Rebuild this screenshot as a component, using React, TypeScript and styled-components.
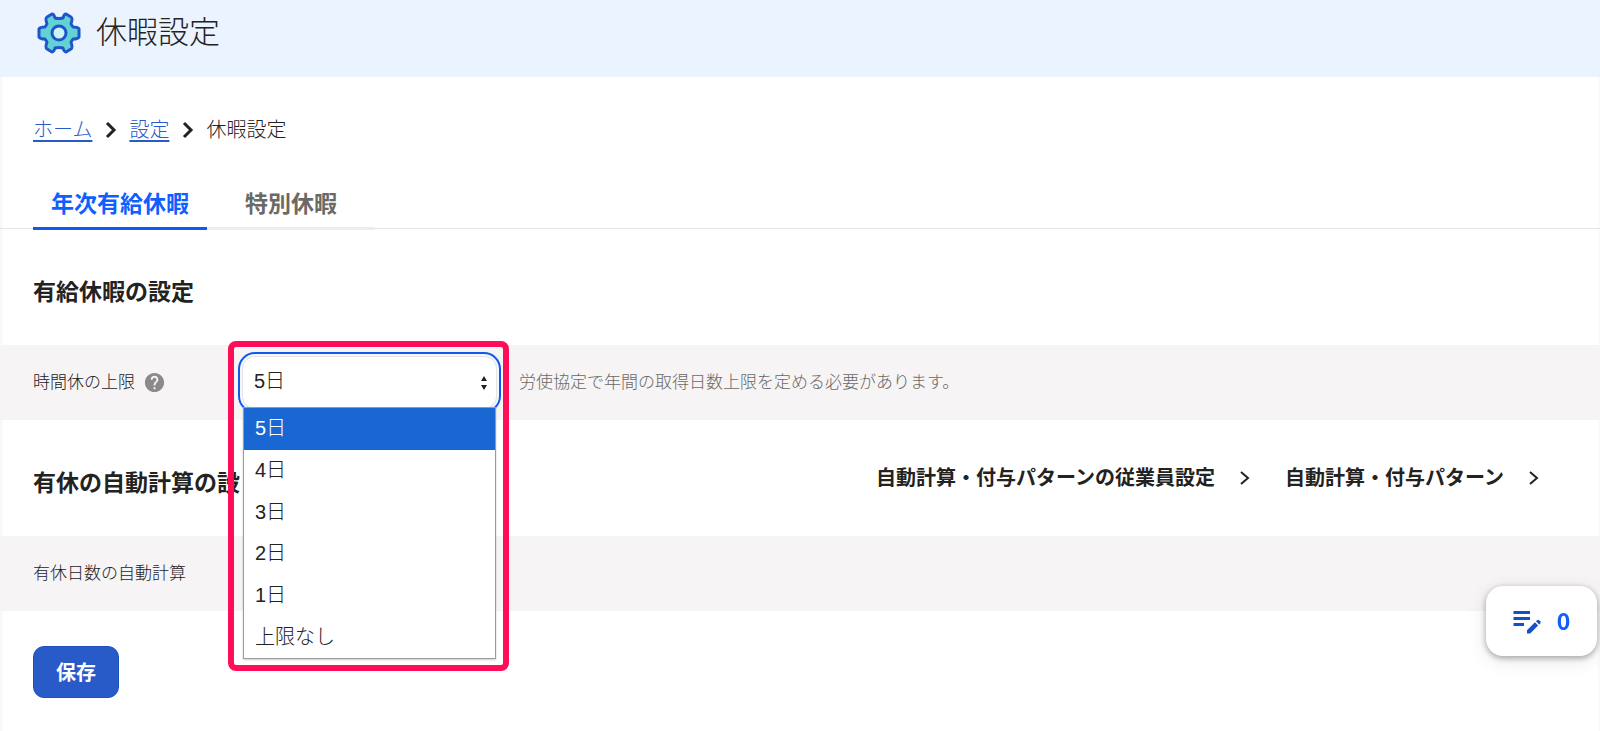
import React, { useId } from "react";
import styled, { createGlobalStyle, css } from "styled-components";
import { MdEditNote, MdHelp } from "react-icons/md";

const GlobalStyle = createGlobalStyle`
  *, *::before, *::after { box-sizing: border-box; }
  body {
    margin: 0;
    background: #fff;
    color: #23221e;
    font-family: "Liberation Sans", "Noto Sans CJK JP", sans-serif;
    font-size: 20px;
    font-weight: 300;
  }
  h1, h2, p, ul, ol { margin: 0; padding: 0; }
  ul, ol { list-style: none; }
  button, select { font: inherit; color: inherit; }
`;

const Page = styled.div`
  min-height: 100vh;
  box-shadow: inset 5px 0 5px -5px #00000014, inset -2px 0 0 #fafafa;
`;

const Header = styled.header`
  display: flex;
  align-items: center;
  gap: 15px;
  height: 77px;
  padding: 0 37px 11px;
  background: #ebf3ff;
`;

const Title = styled.h1`
  font-size: 31px;
  font-weight: 300;
  line-height: 40px;
`;

const Breadcrumb = styled.ol`
  display: flex;
  align-items: center;
  gap: 12px;
  padding: 38px 33px 0;
  line-height: 30px;
`;

const Crumb = styled.li`
  display: flex;
  align-items: center;
  gap: 13px;
`;

const CrumbLink = styled.a`
  color: #285ac8;
  text-decoration: underline;
  text-decoration-thickness: 2px;
  text-underline-offset: 3px;
`;

const TabBar = styled.div`
  display: flex;
  margin-top: 34px;
  padding: 0 33px;
  border-bottom: 1px solid #e4e4e4;
`;

const Tab = styled.button<{ $active?: boolean }>`
  min-width: 168px;
  margin-bottom: -2px;
  padding: 8px 18px 6px;
  border: 0;
  border-bottom: 3px solid ${(p) => (p.$active ? "#0f5aeb" : "#ececec")};
  background: none;
  color: ${(p) => (p.$active ? "#0f5fff" : "#6b6965")};
  font-size: 23px;
  font-weight: 700;
  line-height: 34px;
`;

const SectionHead = styled.div`
  display: flex;
  align-items: center;
  justify-content: space-between;
  height: 116px;
  padding: 0 60px 0 33px;
`;

const SectionTitle = styled.h2`
  padding-top: 10px;
  font-size: 23px;
  font-weight: 700;
  line-height: 34px;
`;

const SectionLinks = styled.nav`
  display: flex;
  gap: 34px;
`;

const SectionLink = styled.a`
  display: flex;
  align-items: center;
  gap: 24px;
  color: inherit;
  font-weight: 700;
  line-height: 30px;
  text-decoration: none;
`;

const Row = styled.div`
  display: flex;
  align-items: center;
  height: 75px;
  padding: 0 33px;
  background: #f6f4f5;
  font-size: 17px;
`;

const RowLabel = styled.div`
  display: flex;
  align-items: center;
  gap: 8px;
  flex: 0 0 210px;

  label {
    padding-bottom: 4px;
  }
`;

const HelpButton = styled.button`
  display: flex;
  padding: 0;
  border: 0;
  background: none;
  color: #8c8989;
`;

const Note = styled.p`
  margin-left: 23px;
  padding-bottom: 4px;
  color: #6b6965;
`;

const Field = styled.div`
  position: relative;
  flex: 0 0 253px;
  font-size: 20px;
`;

const Select = styled.select`
  display: block;
  width: 100%;
  height: 51px;
  padding: 0 11px 3px;
  border: 0;
  border-radius: 12px;
  outline: 0;
  appearance: none;
  background: #fff;
  box-shadow: 0 0 0 1px #e6e4e6, 0 0 0 3px #f4f7ff, 0 0 0 5px #0f5aeb;
`;

const SelectArrows = styled.svg`
  position: absolute;
  top: 18px;
  right: 8px;
  pointer-events: none;
`;

const OptionList = styled.ul`
  position: absolute;
  z-index: 1;
  top: 50px;
  left: 0;
  display: flex;
  flex-direction: column;
  width: 100%;
  height: 252px;
  border: 1px solid #9b9b9b;
  background: #fff;
  box-shadow: 0 1px 2px #00000033;
`;

const OptionItem = styled.li<{ $selected: boolean }>`
  display: flex;
  flex: 1;
  align-items: center;
  padding: 0 11px 4px;
  ${(p) =>
    p.$selected &&
    css`
      background: #1967d2;
      color: #fff;
    `}
`;

const Highlight = styled.div`
  position: absolute;
  z-index: 2;
  inset: -16px -13px -263px -15px;
  border: 6px solid #ff0d57;
  border-radius: 8px;
  pointer-events: none;
`;

const Checkbox = styled.input`
  width: 16px;
  height: 16px;
  margin: 0;
`;

const Actions = styled.div`
  padding: 35px 33px;
`;

const SaveButton = styled.button`
  height: 52px;
  padding: 0 22px 2px;
  border: 1px solid #1e50c0;
  border-radius: 11px;
  background: #285ac8;
  color: #fff;
  font-weight: 700;
`;

const MemoButton = styled.button`
  position: fixed;
  right: 3px;
  bottom: 75px;
  display: flex;
  align-items: center;
  justify-content: center;
  gap: 12px;
  width: 111px;
  height: 70px;
  padding: 0 8px 2px 4px;
  border: 0;
  border-radius: 17px;
  background: #fff;
  box-shadow: 0 2px 6px #00000055, 0 4px 20px #0000001a;
  color: #0f5fff;
  font-family: "Noto Sans CJK JP", sans-serif;
  font-size: 23px;
  font-weight: 700;
`;

const options = ["5日", "4日", "3日", "2日", "1日", "上限なし"];

function GearIcon() {
  return (
    <svg width="44" height="44" viewBox="-22 -22 44 44" aria-hidden="true">
      <path
        d="M-7-19Q-5-19-4-15Q0-14 4-15Q5-19 7-19L12-16Q14-15 12-9L14-6Q19-6 20-4V4Q19 6 14 6L12 9Q14 15 12 16L7 19Q5 19 4 15Q0 14-4 15Q-5 19-7 19L-12 16Q-14 15-12 9L-14 6Q-19 6-20 4V-4Q-19-6-14-6L-12-9Q-14-15-12-16Z"
        fill="#64d2d2"
        stroke="#1e55cd"
        strokeWidth="3"
        strokeLinejoin="round"
      />
      <circle r="7" fill="#cdf3f3" stroke="#1e55cd" strokeWidth="3" />
    </svg>
  );
}

function Chevron({ size, weight }: { size: number; weight: number }) {
  return (
    <svg width="12" height={size} viewBox={`0 0 12 ${size}`} aria-hidden="true">
      <path
        d={`M2 2L9 ${size / 2}L2 ${size - 2}`}
        fill="none"
        stroke="#23221e"
        strokeWidth={weight}
      />
    </svg>
  );
}

export default function App() {
  const limitId = useId();
  const autoId = useId();
  return (
    <Page>
      <GlobalStyle />
      <Header>
        <GearIcon />
        <Title>休暇設定</Title>
      </Header>
      <main>
        <nav aria-label="breadcrumb">
          <Breadcrumb>
            <Crumb>
              <CrumbLink href="#home">ホーム</CrumbLink>
              <Chevron size={18} weight={3} />
            </Crumb>
            <Crumb>
              <CrumbLink href="#settings">設定</CrumbLink>
              <Chevron size={18} weight={3} />
            </Crumb>
            <Crumb aria-current="page">休暇設定</Crumb>
          </Breadcrumb>
        </nav>
        <TabBar role="tablist">
          <Tab role="tab" aria-selected="true" $active>
            年次有給休暇
          </Tab>
          <Tab role="tab" aria-selected="false">
            特別休暇
          </Tab>
        </TabBar>

        <section>
          <SectionHead>
            <SectionTitle>有給休暇の設定</SectionTitle>
          </SectionHead>
          <Row>
            <RowLabel>
              <label htmlFor={limitId}>時間休の上限</label>
              <HelpButton type="button" aria-label="ヘルプ">
                <MdHelp size={23} />
              </HelpButton>
            </RowLabel>
            <Field>
              <Select id={limitId} defaultValue={options[0]}>
                {options.map((o) => (
                  <option key={o}>{o}</option>
                ))}
              </Select>
              <SelectArrows width="8" height="16" viewBox="0 0 8 16" aria-hidden="true">
                <path d="M4 1L7 6H1ZM4 15L7 10H1Z" fill="#23221e" />
              </SelectArrows>
              <OptionList role="listbox">
                {options.map((o, i) => (
                  <OptionItem key={o} role="option" aria-selected={i === 0} $selected={i === 0}>
                    {o}
                  </OptionItem>
                ))}
              </OptionList>
              <Highlight />
            </Field>
            <Note>労使協定で年間の取得日数上限を定める必要があります。</Note>
          </Row>
        </section>

        <section>
          <SectionHead>
            <SectionTitle>有休の自動計算の設</SectionTitle>
            <SectionLinks>
              <SectionLink href="#employees">
                自動計算・付与パターンの従業員設定
                <Chevron size={16} weight={2} />
              </SectionLink>
              <SectionLink href="#patterns">
                自動計算・付与パターン
                <Chevron size={16} weight={2} />
              </SectionLink>
            </SectionLinks>
          </SectionHead>
          <Row>
            <RowLabel>
              <label htmlFor={autoId}>有休日数の自動計算</label>
            </RowLabel>
            <Checkbox id={autoId} type="checkbox" />
          </Row>
        </section>

        <Actions>
          <SaveButton type="button">保存</SaveButton>
        </Actions>
      </main>
      <MemoButton type="button">
        <MdEditNote size={36} color="#1450c8" />0
      </MemoButton>
    </Page>
  );
}
